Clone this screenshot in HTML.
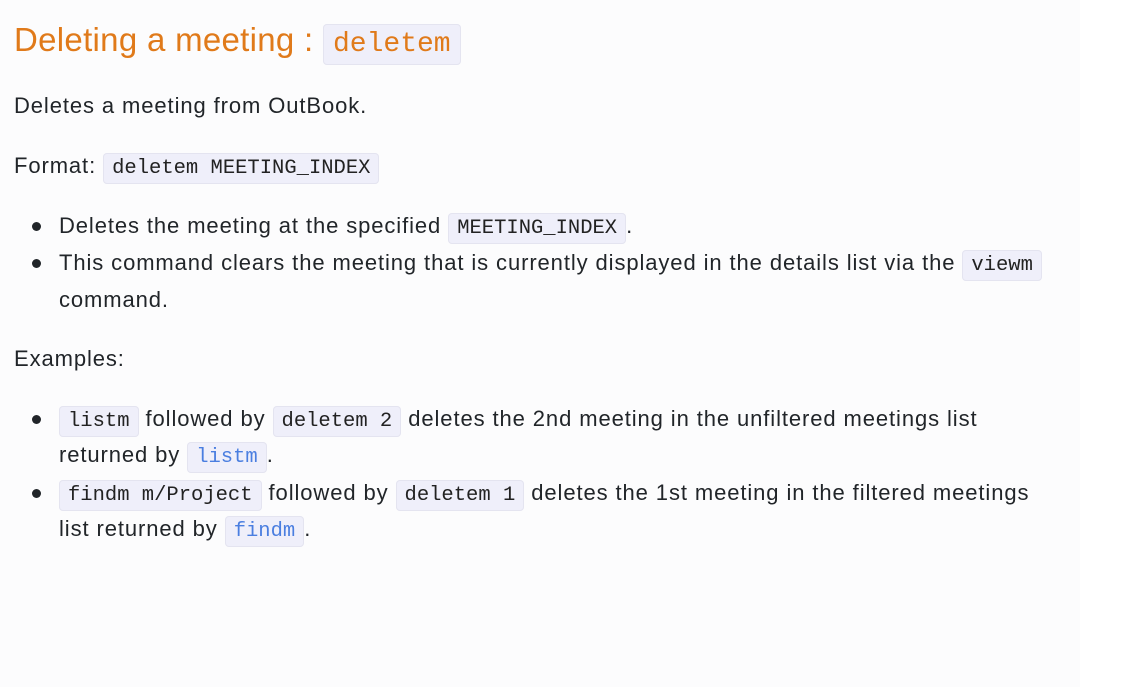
<!DOCTYPE html>
<html><head><meta charset="utf-8"><style>
html,body{margin:0;padding:0}
body{width:1126px;height:687px;background:#fff;position:relative;overflow:hidden;font-family:"Liberation Sans",sans-serif;color:#212529}
.page{position:absolute;left:0;top:0;width:1080px;height:687px;background:#fcfcfd}
.l{position:absolute;white-space:nowrap;font-size:22px;letter-spacing:0.9px;line-height:30px}
code{font-family:"Liberation Mono",monospace;font-size:20.5px;letter-spacing:0;background:#efeffa;border:1px solid #e4e4f0;border-radius:4px;padding:3px 8px;color:#222}
code.b{color:#4a7ee0}
h1{position:absolute;left:14px;top:16px;margin:0;font-weight:normal;font-size:33px;letter-spacing:0.3px;color:#e07a1a;line-height:48px;white-space:nowrap}
h1 code{font-size:28px;color:#e07a1a;padding:4px 9px}
.dot{position:absolute;width:9px;height:9px;border-radius:50%;background:#212529}
</style></head><body><div class="page">
<h1>Deleting a meeting : <code>deletem</code></h1>
<div class="l" style="left:14px;top:91px">Deletes a meeting from OutBook.</div>
<div class="l" style="left:14px;top:151px">Format: <code>deletem MEETING_INDEX</code></div>
<div class="dot" style="left:32px;top:222px"></div>
<div class="l" style="left:59px;top:211px">Deletes the meeting at the specified <code>MEETING_INDEX</code>.</div>
<div class="dot" style="left:32px;top:259px"></div>
<div class="l" style="left:59px;top:248px">This command clears the meeting that is currently displayed in the details list via the <code>viewm</code></div>
<div class="l" style="left:59px;top:285px">command.</div>
<div class="l" style="left:14px;top:344px">Examples:</div>
<div class="dot" style="left:32px;top:415px"></div>
<div class="l" style="left:59px;top:404px"><code>listm</code> followed by <code>deletem 2</code> deletes the 2nd meeting in the unfiltered meetings list</div>
<div class="l" style="left:59px;top:440px">returned by <code class="b">listm</code>.</div>
<div class="dot" style="left:32px;top:489px"></div>
<div class="l" style="left:59px;top:478px"><code>findm m/Project</code> followed by <code>deletem 1</code> deletes the 1st meeting in the filtered meetings</div>
<div class="l" style="left:59px;top:514px">list returned by <code class="b">findm</code>.</div>
</div></body></html>
